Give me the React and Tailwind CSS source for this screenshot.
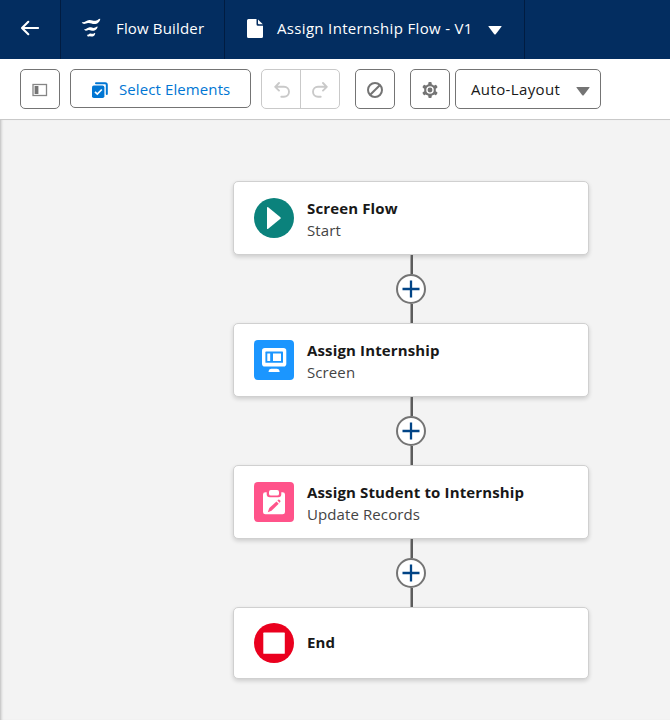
import React from 'react';

const iconButton =
  'flex h-10 w-10 items-center justify-center rounded-[5px] border border-[#747474] bg-white';

function Header() {
  return (
    <header className="flex h-[59px] bg-[#032d60] text-[16px] text-white">
      <div className="flex w-[61px] items-center border-r border-[#011c41] pb-[3px] pl-5">
        <svg width="20" height="16" viewBox="0 0 20 16" fill="none" stroke="white" strokeWidth="2.1" strokeLinecap="round" strokeLinejoin="round">
          <path d="M8.3 1.8 2 8l6.3 6.2M2.2 8h15.9" />
        </svg>
      </div>
      <div className="flex w-[164px] items-center border-r border-[#011c41] pb-[3px] pl-[20px]">
        <svg width="22" height="22" viewBox="0 0 22 22" fill="white">
          <path d="M.8 5.100C3.300 6.300 5.300 3.100 8.200 2.900 11.300 2.700 12.500 4.300 15.200 3.600 17 3.100 17.600 1.500 19.200 1.700 19.400 3.400 17.600 6.300 14.500 7 11.500 7.600 9.500 5.600 7 6.100 4.800 6.500 1.800 8.200.8 5.100Z" />
          <path d="M3.200 12.100C5 12.900 6.300 10.400 8.500 10.200 10.700 10 11.600 11.200 13.500 10.800 14.800 10.500 15.300 9.400 16.600 9.500 16.700 11 15.300 13.300 12.900 13.700 10.700 14.100 9.300 12.700 7.500 13 5.800 13.300 4 14.700 3.200 12.100Z" />
          <path d="M6 17.700C7.200 18.200 7.900 16.500 9.300 16.400 10.700 16.300 11.200 17 12.300 16.700 13.100 16.500 13.400 15.800 14.200 15.900 14.300 17.200 13.300 19.200 11.700 19.500 10.300 19.700 9.500 18.900 8.500 19.200 7.500 19.500 6.400 19.900 6 17.700Z" />
        </svg>
        <span className="ml-[13px] whitespace-nowrap text-[15px] tracking-[0.16px]">Flow Builder</span>
      </div>
      <div className="flex w-[300px] items-center border-r border-[#011c41] pb-[3px] pl-[22px]">
        <svg width="16" height="19" viewBox="0 0 16 19" fill="white">
          <path d="M1.500 0H9.500V5.200Q9.500 6.700 11 6.700H16V17.500Q16 19 14.500 19H1.500Q0 19 0 17.500V1.500Q0 0 1.500 0Z" />
          <path d="M11 .4V4.300Q11 5.200 11.900 5.200H15.800Z" />
        </svg>
        <span className="ml-[14px] w-[195px] whitespace-nowrap text-[15px] tracking-[0.33px]">Assign Internship Flow - V1</span>
        <svg className="ml-[16px] mt-[4px]" width="14" height="9" viewBox="0 0 14 9" fill="white">
          <path d="M.8 0H13.200Q14 0 13.400.8L7.700 8.200Q7 9 6.300 8.200L.6.8Q0 0 .8 0Z" />
        </svg>
      </div>
    </header>
  );
}

function Toolbar() {
  return (
    <div className="flex h-[61px] items-start border-b border-[#c9c9c9] bg-white pl-5 pt-[10px]">
      <button className={iconButton}>
        <svg className="mt-px" width="16" height="14" viewBox="0 0 16 14">
          <rect x="1" y="1.500" width="13.500" height="11" fill="white" stroke="#858585" strokeWidth="1.300" />
          <rect x="2.600" y="3" width="3.800" height="8" fill="#747474" />
        </svg>
      </button>
      <button className="ml-[10px] flex h-[39px] w-[181px] items-center rounded-[5px] border border-[#747474] bg-white pl-[20px]">
        <svg className="mt-[3px]" width="18" height="18" viewBox="0 0 18 18">
          <path d="M5 2.300H14.200Q15.800 2.300 15.800 3.900V13" fill="none" stroke="#0176d3" strokeWidth="2" strokeLinecap="round" />
          <rect x="1" y="4.600" width="12.400" height="12.400" rx="1.800" fill="#0176d3" />
          <path d="m4 10.800 2.300 2.300 4.500-4.600" fill="none" stroke="white" strokeWidth="1.700" />
        </svg>
        <span className="ml-[10px] mt-[2px] whitespace-nowrap text-[15px] tracking-[0.1px] text-[#0176d3]">Select Elements</span>
      </button>
      <div className="ml-[10px] flex h-10 w-[79px] rounded-[5px] border border-[#c9c9c9] text-[#c9c9c9]">
        <button className="flex w-[39px] items-center justify-center border-r border-[#c9c9c9] pl-px pt-[2px]">
          <svg width="16" height="18" viewBox="0 0 16 18" fill="none" stroke="currentColor" strokeWidth="1.900" strokeLinecap="round" strokeLinejoin="round">
            <path d="M5 2 1.200 5.800 5 9.600M1.500 5.800H10a4.600 4.600 0 0 1 0 10H7.300" />
          </svg>
        </button>
        <button className="flex w-[38px] items-center justify-center pt-[2px]">
          <svg width="16" height="18" viewBox="0 0 16 18" fill="none" stroke="currentColor" strokeWidth="1.900" strokeLinecap="round" strokeLinejoin="round">
            <path d="m11 2 3.800 3.800L11 9.600M14.500 5.800H6a4.600 4.600 0 0 0 0 10h2.700" />
          </svg>
        </button>
      </div>
      <button className={`${iconButton} ml-[15px]`}>
        <svg className="mt-px" width="16" height="16" viewBox="0 0 16 16" fill="none" stroke="#747474" strokeWidth="2">
          <circle cx="8" cy="8" r="7" />
          <path d="M3.200 12.800 12.800 3.200" />
        </svg>
      </button>
      <button className={`${iconButton} ml-[15px]`}>
        <svg className="mt-px" width="16" height="16" viewBox="0 0 16 16" fill="#747474">
          <rect x="6.300" y="0" width="3.400" height="16" rx="1" />
          <rect x="6.300" y="0" width="3.400" height="16" rx="1" transform="rotate(60 8 8)" />
          <rect x="6.300" y="0" width="3.400" height="16" rx="1" transform="rotate(120 8 8)" />
          <circle cx="8" cy="8" r="5.900" />
          <circle cx="8" cy="8" r="3.100" fill="#747474" stroke="white" strokeWidth="1.300" />
        </svg>
      </button>
      <button className="ml-[5px] flex h-10 w-[146px] items-center rounded-[5px] border border-[#747474] bg-white pl-[15px]">
        <span className="w-[90px] whitespace-nowrap text-left text-[15px] tracking-[0.37px] text-[#181818]">Auto-Layout</span>
        <svg className="ml-[15px] mt-[4px]" width="14" height="9" viewBox="0 0 14 9" fill="#747474">
          <path d="M.8 0H13.200Q14 0 13.400.8L7.700 8.200Q7 9 6.300 8.200L.6.8Q0 0 .8 0Z" />
        </svg>
      </button>
    </div>
  );
}

function StartIcon() {
  return (
    <svg width="40" height="40" viewBox="0 0 40 40">
      <circle cx="20" cy="20" r="20" fill="#0b827c" />
      <path d="M13 9.800Q13 8.400 14.200 9.200L26.400 19.200Q27.300 20 26.400 20.800L14.200 30.800Q13 31.600 13 30.200Z" fill="white" />
    </svg>
  );
}

function ScreenIcon() {
  return (
    <svg width="40" height="40" viewBox="0 0 40 40">
      <rect width="40" height="40" rx="4" fill="#1b96ff" />
      <rect x="8" y="8" width="24.300" height="18.500" rx="2.800" fill="white" />
      <rect x="11.400" y="11.600" width="17.600" height="11.200" rx=".6" fill="#1b96ff" />
      <rect x="13.300" y="13.500" width="2.900" height="7.500" fill="white" />
      <rect x="19" y="13.500" width="8" height="7.500" fill="white" />
      <path d="M14.500 31.200Q15.200 28.800 17.300 28.800H22.900Q25 28.800 25.700 31.200Q25.900 32 25.100 32H15.100Q14.300 32 14.500 31.200Z" fill="white" />
    </svg>
  );
}

function UpdateIcon() {
  return (
    <svg width="40" height="40" viewBox="0 0 40 40">
      <rect width="40" height="40" rx="4" fill="#ff538a" />
      <path d="M11.400 10.200H12.700V12.200Q12.700 15.200 15.700 15.200H24.300Q27.300 15.200 27.300 12.200V10.200H28.600Q31 10.200 31 12.600V30Q31 32.300 28.600 32.300H11.400Q9 32.300 9 30V12.600Q9 10.200 11.400 10.200Z" fill="white" />
      <rect x="15" y="8" width="10" height="5.600" rx="1.900" fill="white" />
      <path d="m13.800 30.200 1.500-4.100 7.200-6.700 2.200 2.300-7.200 7.100Z" fill="#ff538a" />
      <path d="m23.400 18.500.8-.7q.7-.6 1.500.1l.5.500q.7.800 0 1.500l-.7.800Z" fill="#ff538a" />
    </svg>
  );
}

function EndIcon() {
  return (
    <svg width="40" height="40" viewBox="0 0 40 40">
      <circle cx="20" cy="20" r="20" fill="#ea001e" />
      <rect x="9.300" y="9.600" width="21.500" height="21.200" rx=".6" fill="white" />
    </svg>
  );
}

function Connector() {
  return (
    <div className="flex h-[68px] w-[30px] flex-col items-center">
      <div className="h-[19px] w-[2px] translate-x-px bg-[#5c5c5c] shadow-[-1px_0_0_#a3a3a3]" />
      <div className="flex h-[30px] w-[30px] shrink-0 items-center justify-center rounded-full border-2 border-[#747474] bg-white">
        <svg width="18" height="18" viewBox="0 0 18 18" stroke="#014486" strokeWidth="2.300">
          <path d="M9 .5v17M.5 9h17" />
        </svg>
      </div>
      <div className="h-[19px] w-[2px] translate-x-px bg-[#5c5c5c] shadow-[-1px_0_0_#a3a3a3]" />
    </div>
  );
}

const nodes = [
  { title: 'Screen Flow', kind: 'Start', Icon: StartIcon },
  { title: 'Assign Internship', kind: 'Screen', Icon: ScreenIcon },
  { title: 'Assign Student to Internship', kind: 'Update Records', Icon: UpdateIcon },
  { title: 'End', kind: null, Icon: EndIcon },
];

function FlowCard({ title, kind, Icon }) {
  return (
    <div className={`${kind ? 'h-[74px]' : 'h-[72px]'} flex w-[356px] items-center rounded-[5px] border border-[#d0d0d0] bg-white pl-5 shadow-[0_2px_4px_rgba(0,0,0,0.16)]`}>
      <Icon />
      <div className={`${kind ? 'pt-[2px]' : 'pb-[2px]'} ml-[13px] whitespace-nowrap text-[15px] leading-[22px]`}>
        <div className="font-bold tracking-[0.14px] text-[#181818]">{title}</div>
        {kind && <div className="tracking-[0.1px] text-[#444444]">{kind}</div>}
      </div>
    </div>
  );
}

export default function App() {
  return (
    <div className="flex h-[720px] w-[670px] flex-col overflow-hidden font-['Segoe_UI','Open_Sans','Noto_Sans',sans-serif]">
      <Header />
      <Toolbar />
      <main className="flex flex-1 flex-col items-center bg-[#f3f3f3] pl-[152px] pt-[61px] shadow-[inset_3px_0_3px_-2px_rgba(0,0,0,0.25)]">
        {nodes.map((node, index) => (
          <React.Fragment key={node.title}>
            {index > 0 && <Connector />}
            <FlowCard {...node} />
          </React.Fragment>
        ))}
      </main>
    </div>
  );
}
